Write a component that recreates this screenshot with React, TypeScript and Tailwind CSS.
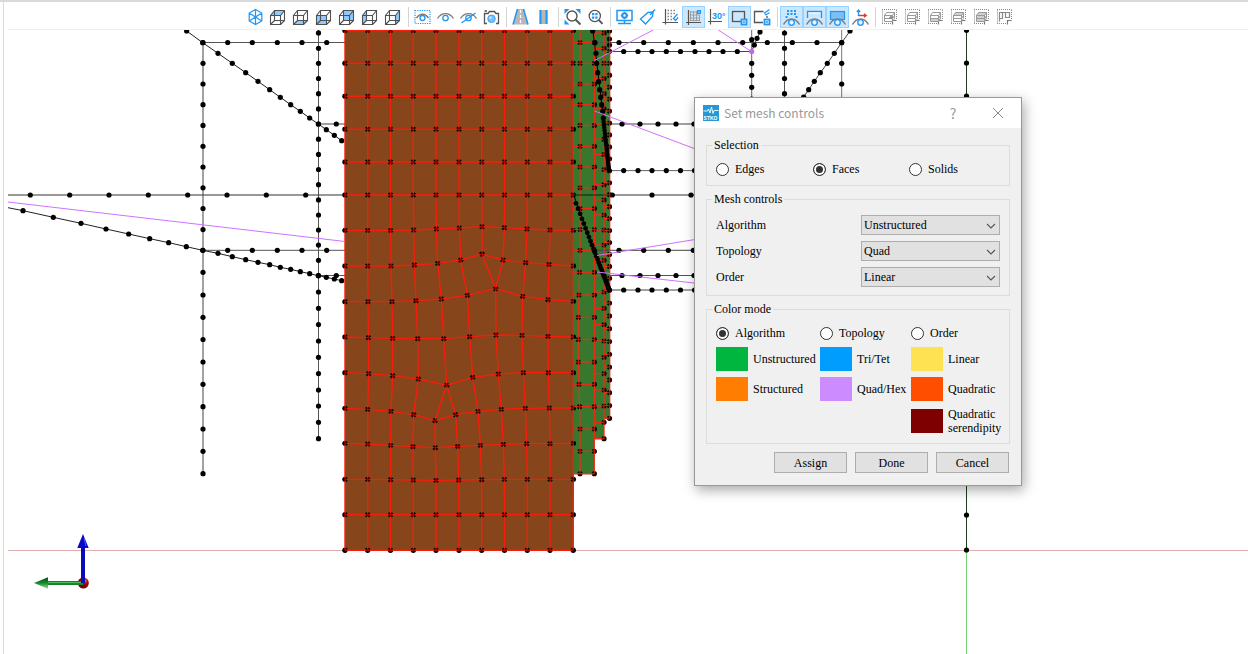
import React, { useState } from "react";

type Pt = [number, number];

/* ---------- toolbar icons, drawn in a 23 x 22 cell ---------- */

const BLUE = "#2196f3";
const DARK = "#505050";
const GRAY = "#7d7d7d";

const Cell = ({ children }: { children: React.ReactNode }) => (
  <svg viewBox="0 0 23 22" className="block h-[22px] w-[23px]" fill="none" aria-hidden="true">
    {children}
  </svg>
);

const faces: Record<string, string> = {
  top: "3.5,9.5 7.5,4.5 17.5,4.5 13.5,9.5",
  bottom: "3.5,18.5 7.5,14.5 17.5,14.5 13.5,18.5",
  front: "3.5,9.5 13.5,9.5 13.5,18.5 3.5,18.5",
  back: "7.5,4.5 17.5,4.5 17.5,14.5 7.5,14.5",
  left: "3.5,9.5 7.5,4.5 7.5,14.5 3.5,18.5",
  right: "13.5,9.5 17.5,4.5 17.5,14.5 13.5,18.5",
};

const Box = ({ face }: { face: string }) => (
  <Cell>
    <polygon points={faces[face]} fill="#90caff" />
    <path
      d="M3.5 9.5H13.5V18.5H3.5ZM7.5 4.5H17.5V14.5H7.5ZM3.5 9.5L7.5 4.5M13.5 9.5L17.5 4.5M13.5 18.5L17.5 14.5M3.5 18.5L7.5 14.5"
      stroke={DARK}
      strokeWidth="1.1"
    />
  </Cell>
);

const Iso = () => (
  <Cell>
    <path
      d="M11.5 3.5L17.8 7V15L11.5 18.5L5.2 15V7ZM11.5 11V3.5M11.5 11L17.8 15M11.5 11L5.2 15M5.2 7L11.5 11L17.8 7M11.5 11V18.5"
      stroke={BLUE}
      strokeWidth="1.2"
    />
  </Cell>
);

const EyeShape = () => (
  <>
    <path d="M3.5 12.5C7.5 6 15.5 6 19.5 12.5" stroke={GRAY} strokeWidth="1.4" />
    <circle cx="11.5" cy="12" r="2.7" stroke={BLUE} strokeWidth="1.3" fill="#fff" />
  </>
);

const LowEye = () => (
  <>
    <path d="M3.5 18.5C7.5 11 15.5 11 19.5 18.5" stroke={GRAY} strokeWidth="1.5" />
    <circle cx="11.5" cy="16.5" r="2.8" stroke={BLUE} strokeWidth="1.3" fill="#e5f3ff" />
  </>
);

const Grayed = ({ kind }: { kind: number }) => (
  <Cell>
    <path
      d="M4 3.5H18.5M4.5 3.5V18M4 17.5H14M18.5 4V13"
      stroke="#888"
      strokeWidth="1"
      strokeDasharray="1 1"
    />
    <path d="M14.5 18.5V14.5H18.5" stroke="#777" strokeWidth="1.2" />
    {kind === 5 ? (
      <path d="M6.5 6V15.5M9.5 6V12.5H6.5M9.5 6.5H16.5V11.5H12.5V6.5M6.5 6.5H9.5" stroke="#888" strokeWidth="1.2" />
    ) : (
      <>
        <path
          d="M6.5 9.5L8.5 6.5H16.5L14.5 9.5Z"
          fill={kind >= 3 ? "#d0d0d0" : "none"}
          stroke="#999"
        />
        <path d="M6.5 9.5H14.5V12.5H6.5Z" fill={kind === 4 ? "#d0d0d0" : "none"} stroke="#999" />
        <path
          d="M6.5 12.5H14.5V15.5H6.5ZM14.5 15.5L16.5 12.5V6.5M14.5 12.5L16.5 9.5"
          fill={kind === 2 || kind === 4 ? "#d0d0d0" : "none"}
          stroke="#999"
        />
        {kind === 0 && <circle cx="13" cy="11.5" r="1.6" fill="#888" />}
      </>
    )}
  </Cell>
);

type Tool = { label: string; icon: React.ReactNode; on?: boolean };

const groups: Tool[][] = [
  [
    { label: "Isometric view", icon: <Iso /> },
    { label: "Top view", icon: <Box face="top" /> },
    { label: "Bottom view", icon: <Box face="bottom" /> },
    { label: "Front view", icon: <Box face="front" /> },
    { label: "Back view", icon: <Box face="back" /> },
    { label: "Left view", icon: <Box face="left" /> },
    { label: "Right view", icon: <Box face="right" /> },
  ],
  [
    {
      label: "Isolate",
      icon: (
        <Cell>
          <rect x="4" y="4.5" width="15" height="13" stroke={BLUE} strokeWidth="1.2" strokeDasharray="1.2 1.1" />
          <path d="M5.5 12C9 7 14 7 17.5 12" stroke={GRAY} strokeWidth="1.4" />
          <circle cx="11.5" cy="12" r="2.5" stroke={BLUE} strokeWidth="1.3" />
        </Cell>
      ),
    },
    { label: "Show", icon: <Cell><EyeShape /></Cell> },
    {
      label: "Hide",
      icon: (
        <Cell>
          <EyeShape />
          <path d="M4.5 17L18.5 7" stroke={BLUE} strokeWidth="1.3" />
        </Cell>
      ),
    },
    {
      label: "Snapshot",
      icon: (
        <Cell>
          <path d="M7 17.5H4.5V7.5H8L9.5 5.5H14.5L16 7.5H18.5V17.5H16M4.5 5H7" stroke="#555" strokeWidth="1.3" />
          <circle cx="11.5" cy="12.8" r="3.8" fill="#7cc0fa" stroke={BLUE} strokeWidth="0.8" />
          <circle cx="10.5" cy="11.6" r="1.2" fill="#d4ebff" />
        </Cell>
      ),
    },
  ],
  [
    {
      label: "Perspective",
      icon: (
        <Cell>
          <path d="M8.5 3H14.5L19 18.5H4Z" fill="#b8b8b8" />
          <path d="M8.5 3L4 18.5M14.5 3L19 18.5" stroke={BLUE} strokeWidth="1.5" />
          <path d="M11.5 4V18.5" stroke="#fff" strokeWidth="1.2" strokeDasharray="3 2" />
        </Cell>
      ),
    },
    {
      label: "Orthographic",
      icon: (
        <Cell>
          <path d="M7.5 4H15.5V18H7.5Z" fill="#b8b8b8" />
          <path d="M8.5 4V18M14.5 4V18" stroke={BLUE} strokeWidth="2" />
        </Cell>
      ),
    },
  ],
  [
    {
      label: "Zoom to fit",
      icon: (
        <Cell>
          <path d="M3.5 8V3H8.5ZM14.5 3H19.5V8ZM3.5 13.5V18.5H8.5Z" fill={BLUE} />
          <circle cx="11" cy="10" r="5" stroke="#555" strokeWidth="1.4" fill="#fff" />
          <path d="M14.5 13.5L19.5 18.5" stroke="#555" strokeWidth="2" />
        </Cell>
      ),
    },
    {
      label: "Zoom selection",
      icon: (
        <Cell>
          <circle cx="10.8" cy="10" r="5.6" stroke="#555" strokeWidth="1.3" />
          <path d="M14.8 14L18.5 17.8" stroke="#555" strokeWidth="1.8" />
          <path d="M8 7H10.3V9.3H8ZM11.3 7H13.6V9.3H11.3ZM8 10.5H10.3V12.8H8ZM11.3 10.5H13.6V12.8H11.3Z" fill={BLUE} />
        </Cell>
      ),
    },
  ],
  [
    {
      label: "Display settings",
      icon: (
        <Cell>
          <rect x="4" y="4.5" width="15" height="10" stroke={BLUE} strokeWidth="1.5" />
          <circle cx="11.5" cy="9.5" r="2.2" stroke={BLUE} strokeWidth="2" />
          <path d="M11.5 5.8V7M11.5 12V13.2M7.8 9.5H9M14 9.5H15.2M11.5 15V17.5M5 17.5H18" stroke={BLUE} strokeWidth="1.5" />
        </Cell>
      ),
    },
    {
      label: "Label",
      icon: (
        <Cell>
          <path d="M12 6.5L17 6L16.5 10.5L9.5 18L4.5 13Z" stroke={BLUE} strokeWidth="1.4" />
          <path d="M14 9L19 3.5" stroke={BLUE} strokeWidth="1.4" />
        </Cell>
      ),
    },
    {
      label: "Grid",
      icon: (
        <Cell>
          <path d="M6.5 3V18.5M3.5 16.5H19" stroke="#555" strokeWidth="1.2" />
          <path d="M8.5 4.5H17.5M8.5 7.5H17.5M8.5 10.5H14M8.5 13.5H13" stroke="#888" strokeWidth="1.4" strokeDasharray="1.5 1.5" />
          <path d="M18.5 8L14.5 12.5L16.5 14.5L19 11.5" stroke={BLUE} strokeWidth="1.3" />
        </Cell>
      ),
    },
    {
      label: "Snap to grid",
      on: true,
      icon: (
        <Cell>
          <path d="M6.5 4V19M4 16.5H19" stroke="#555" strokeWidth="1.2" />
          <path d="M8.5 5V15M11.5 5V15M14.5 5V15M17.5 9V15M8 6H14M8 9H18M8 12H18M8 14.5H18" stroke="#999" strokeWidth="0.9" />
          <rect x="15.5" y="4.5" width="3" height="3" fill="#6cb8f8" stroke={BLUE} />
        </Cell>
      ),
    },
    {
      label: "Angle snap",
      icon: (
        <Cell>
          <path d="M5.5 3V18.5M3 15.5H17" stroke="#555" strokeWidth="1.2" />
          <text x="7" y="12.5" fontSize="9" fontFamily="Liberation Sans" fontWeight="700" fill={BLUE}>30°</text>
        </Cell>
      ),
    },
    {
      label: "Pick rectangle",
      on: true,
      icon: (
        <Cell>
          <rect x="4.5" y="5.5" width="12" height="10" stroke="#555" strokeWidth="1.3" />
          <rect x="13.5" y="13.5" width="5" height="5" fill="#fff" stroke={BLUE} strokeWidth="1.8" />
          <circle cx="16" cy="16" r="1" fill={BLUE} />
        </Cell>
      ),
    },
    {
      label: "Pick options",
      icon: (
        <Cell>
          <path d="M12.5 5.5H3.5V16.5H12M16 10V12" stroke="#555" strokeWidth="1.3" />
          <rect x="13.5" y="13.5" width="5" height="5" fill="#fff" stroke={BLUE} strokeWidth="1.8" />
          <circle cx="16" cy="16" r="1" fill={BLUE} />
          <path d="M18.5 3.5L13.5 7L15 9L18.5 6.5" stroke={BLUE} strokeWidth="1.2" />
        </Cell>
      ),
    },
  ],
  [
    {
      label: "Show vertices",
      on: true,
      icon: (
        <Cell>
          <path
            d="M7 4H9V6H7ZM10.5 4H12.5V6H10.5ZM14 4H16V6H14ZM7 7H9V9H7ZM10.5 7H12.5V9H10.5ZM14 7H16V9H14ZM5.5 10H7.5V12H5.5ZM15.5 10H17.5V12H15.5Z"
            fill={BLUE}
          />
          <LowEye />
        </Cell>
      ),
    },
    {
      label: "Show edges",
      on: true,
      icon: (
        <Cell>
          <path d="M4.5 12V5.5H18.5V12" stroke={BLUE} strokeWidth="1.3" />
          <path d="M5.5 7H17.5" stroke="#fff" />
          <LowEye />
        </Cell>
      ),
    },
    {
      label: "Show faces",
      on: true,
      icon: (
        <Cell>
          <rect x="4.5" y="5.5" width="14" height="8" fill="#7cbef8" stroke={BLUE} strokeWidth="1.2" />
          <LowEye />
        </Cell>
      ),
    },
    {
      label: "Show axes",
      icon: (
        <Cell>
          <LowEye />
          <path d="M9.5 10V4M7.8 6L9.5 4L11.2 6" stroke={BLUE} strokeWidth="1.3" />
          <path d="M9.5 9.5H17M15 7.8L17.3 9.5L15 11.2" stroke="#e53935" strokeWidth="1.3" />
        </Cell>
      ),
    },
  ],
  [
    { label: "Vertex group", icon: <Grayed kind={0} /> },
    { label: "Edge group", icon: <Grayed kind={1} /> },
    { label: "Face group", icon: <Grayed kind={2} /> },
    { label: "Solid group", icon: <Grayed kind={3} /> },
    { label: "Body group", icon: <Grayed kind={4} /> },
    { label: "Interaction group", icon: <Grayed kind={5} /> },
  ],
];

const Toolbar = () => (
  <div role="toolbar" aria-label="View" className="flex shrink-0 items-center overflow-hidden border-b border-[#f0f0f0] pt-1 pb-px pl-[236px]">
    {groups.map((g, i) => (
      <React.Fragment key={i}>
        {i > 0 && (
          <span className="flex w-1.5 shrink-0 justify-center">
            <span className="h-5 w-px bg-[#d4d4d4]" />
          </span>
        )}
        {g.map((t) => (
          <button
            key={t.label}
            type="button"
            aria-label={t.label}
            className={
              t.on
                ? "shrink-0 bg-[#cce8ff] outline outline-1 -outline-offset-1 outline-[#99d1ff]"
                : "shrink-0 hover:bg-[#e5f3ff]"
            }
          >
            {t.icon}
          </button>
        ))}
      </React.Fragment>
    ))}
  </div>
);

/* ---------- mesh geometry ---------- */

const colX = [345, 367.7, 390.5, 413.3, 436, 459, 481.7, 504.5, 527.3, 550, 573.2];
const flat = (y: number): Pt[] => colX.map((x) => [x, y]);
const local = (pts: Pt[]): Pt[] => pts.map(([x, y]) => [330 + x / 3, 220 + y / 3]);

const rows: Pt[][] = [
  flat(30.6),
  flat(63.3),
  flat(96.3),
  flat(129.2),
  flat(162),
  flat(195),
  local([[45, 31], [113, 31], [182, 31], [251, 30], [319, 27], [388, 24], [456, 20], [523, 23], [591, 27], [660, 30], [730, 31]]),
  local([[45, 138], [113, 138], [183, 138], [253, 135], [323, 130], [392, 120], [456, 102], [519, 120], [587, 128], [657, 133], [730, 138]]),
  local([[45, 245], [114, 245], [186, 245], [258, 242], [334, 237], [412, 226], [497, 206], [578, 229], [654, 239], [730, 244]]),
  local([[45, 351], [115, 353], [188, 355], [263, 356], [341, 356], [419, 350], [498, 345], [576, 346], [654, 349], [730, 351]]),
  local([[45, 458], [116, 461], [188, 467], [265, 477], [350, 496], [428, 472], [505, 462], [580, 458], [655, 458], [730, 458]]),
  local([[45, 565], [113, 568], [183, 574], [251, 584], [315, 602], [377, 584], [444, 574], [514, 568], [586, 565], [658, 564], [730, 564]]),
  local([[45, 670], [113, 672], [182, 676], [249, 680], [316, 683], [383, 679], [451, 676], [520, 673], [590, 671], [660, 671], [730, 670]]),
  local([[45, 778], [113, 778], [182, 779], [250, 780], [318, 781], [386, 780], [455, 779], [523, 778], [592, 778], [660, 778], [730, 778]]),
  flat(514.7),
  flat(550.3),
];

/* verticals join equal indices; where the count changes, one node takes two */
const verticals: [Pt, Pt][] = rows.slice(1).flatMap((b, i) => {
  const a = rows[i];
  if (a.length === b.length) return a.map((p, k): [Pt, Pt] => [p, b[k]]);
  if (a.length > b.length) return a.map((p, k): [Pt, Pt] => [p, b[k > 6 ? k - 1 : k]]);
  return b.map((p, k): [Pt, Pt] => [a[k > 4 ? k - 1 : k], p]);
});

const yA = [42.5, 63.3, 84, 104.7, 125.4, 146.3, 167, 187.8, 208.5, 229.6, 250.3, 272.3, 295, 317.3, 339.5, 362, 384.3, 406.7, 429, 451.3, 473.7];
const xA = [580, 580, 580, 580, 580, 580, 580, 580, 580, 580, 580, 579.6, 579, 578.3, 578.3, 578.3, 579, 579.6, 580, 580, 580];
const yB = [32.9, 48.3, 63.3, 78.5, 93.7, 108.9, 124, 139.2, 154.4, 169.5, 184.7, 199.9, 215, 230, 245.1, 260.3, 275.6, 292, 308.3, 324.6, 341, 357.3, 373.6, 390, 406, 422.3, 438.7];
const yC = [
  ...Array.from({ length: 21 }, (_, i) => 51.3 + i * 11.95),
  ...Array.from({ length: 10 }, (_, i) => 303.1 + i * 12.8),
];

const crowd = (a: Pt, b: Pt, n: number, power: number): Pt[] =>
  Array.from({ length: n + 1 }, (_, i) => {
    const t = 1 - Math.pow(1 - i / n, power);
    return [a[0] + (b[0] - a[0]) * t, a[1] + (b[1] - a[1]) * t];
  });

const third = (pts: Pt[], ox = 0, oy = 20): Pt[] => pts.map(([x, y]) => [ox + x / 3, oy + y / 3]);

const upperBrace = third([[560, 33], [608, 68], [654, 100], [697, 130], [737, 158], [774, 184], [809, 209], [841, 232], [872, 254], [901, 274], [929, 294], [955, 312], [979, 329], [1003, 346], [1025, 362]]);
const lowerBrace = third([[69, 572], [160, 592], [243, 610], [318, 627], [386, 642], [449, 656], [506, 668], [559, 680], [608, 691], [654, 700], [697, 710], [737, 719], [774, 727], [809, 734], [841, 742], [872, 748], [901, 755], [929, 761], [955, 767], [979, 772], [1003, 777], [1025, 782]]);
const rightBrace = third([[750, 33], [725, 68], [703, 100], [682, 130], [661, 158], [643, 184], [626, 209], [611, 231]], 600);
const shortBrace = third([[482, 30], [480, 36], [471, 55], [463, 75], [455, 95]], 600);

const along = (y: number, xs: number[]): Pt[] => xs.map((x) => [x, y]);
const down = (x: number, ys: number[]): Pt[] => ys.map((y) => [x, y]);
const five = [227.7, 252.3, 277.3, 302, 326.7];
const wide = [623.7, 638, 652, 666.3, 680.5, 694.5];
const mid = [622, 640, 658, 676, 694];

const wireDots: Pt[] = [
  ...upperBrace,
  ...lowerBrace,
  ...rightBrace,
  ...shortBrace.slice(1, 4),
  ...down(203, yA),
  ...down(318.5, yB),
  ...along(42.5, five),
  ...along(124, [336.3]),
  ...along(195, [30.3, 69.7, 109, 148.3, 187.7, 227, 266.3, 305.7]),
  ...along(250.3, five),
  ...along(275.5, [336.3]),
  ...along(42.5, [619, 643.7, 668.3, 693.3, 718, 742.7, 767.3, 792.3, 817, 841.7]),
  ...along(51.5, [...wide.slice(0, 5), 695, 709, 723, 737.3]),
  ...along(124, mid),
  ...along(170.6, wide),
  ...along(195, [612.3, 652, 691]),
  ...along(250.3, [619, 643.7, 668.3, 693.3]),
  ...along(275.5, mid),
  ...along(290, wide),
  ...down(751.7, [39.7, 63.3, 75.3, 87.3, 99]),
  ...down(784.5, [33, 48.3, 63.3, 78.5, 93.7]),
  ...down(841.7, [63.3, 84]),
  ...down(966.5, [30.3, 63, 96, 515, 550]),
];

const wires: [number, number, number, number, string][] = [
  [203, 42, 203, 474, "#444"],
  [318.5, 30, 318.5, 439, "#555"],
  [203, 42.5, 345, 42.5, "#555"],
  [318.5, 124, 345, 124, "#444"],
  [8, 195, 345, 195, "#333"],
  [203, 250.3, 345, 250.3, "#555"],
  [318.5, 275.5, 345, 275.5, "#555"],
  [594, 42.5, 842, 42.5, "#555"],
  [610, 51.5, 752, 51.5, "#444"],
  [610, 124, 700, 124, "#444"],
  [610, 170.6, 700, 170.6, "#666"],
  [573, 195, 700, 195, "#333"],
  [594, 250.3, 700, 250.3, "#444"],
  [604, 275.5, 700, 275.5, "#555"],
  [610, 290, 700, 290, "#444"],
  [751.7, 30, 751.7, 100, "#666"],
  [784.5, 30, 784.5, 100, "#555"],
  [841.7, 30, 841.7, 100, "#777"],
  [966.5, 30, 966.5, 550, "#1f3d1f"],
];

const poly = (pts: Pt[]) => pts.map((p) => p.join(",")).join(" ");

const Dots = ({ pts, r = 2.6, color = "#000" }: { pts: Pt[]; r?: number; color?: string }) => (
  <g fill={color}>
    {pts.map(([x, y], i) => (
      <circle key={i} cx={x} cy={y} r={r} />
    ))}
  </g>
);

const sideNodes: Pt[] = [
  ...yA.flatMap((y, i): Pt[] => [[xA[i], y], [594.3, y]]),
  ...down(604, yB),
  ...down(609.5, [31, 39, 45, ...yC]),
];

const Scene = () => (
  <svg className="absolute inset-0 h-full w-full" fill="none" role="img" aria-label="Finite element model">
    <defs>
      <radialGradient id="ball" cx="0.65" cy="0.3">
        <stop offset="0" stopColor="#f66" />
        <stop offset="0.5" stopColor="#c00000" />
        <stop offset="1" stopColor="#700" />
      </radialGradient>
      <linearGradient id="leaf" x1="0" y1="0" x2="0" y2="1">
        <stop offset="0" stopColor="#064d14" />
        <stop offset="0.5" stopColor="#178a2c" />
        <stop offset="1" stopColor="#8fdc9c" />
      </linearGradient>
    </defs>
    <g transform="translate(-8 -30)">
      <path d="M8 550.5H4000" stroke="#dfb0b0" />
      <path d="M966.5 550V4000" stroke="#6fd06f" />

      <polygon points="345,30 573.5,30 573.5,550.3 345,550.3" fill="#87451c" />
      <polygon points="573.5,30 609.7,30 609.7,418.5 604,418.5 604,438.7 594.3,438.7 594.3,473.7 573.5,473.7" fill="#37772e" />

      {wires.map(([x1, y1, x2, y2, c], i) => (
        <path key={i} d={`M${x1} ${y1}L${x2} ${y2}`} stroke={c} />
      ))}
      <polyline points={poly(upperBrace)} stroke="#222" />
      <polyline points={poly([[8, 207.7], ...lowerBrace])} stroke="#222" />
      <polyline points={poly(rightBrace)} stroke="#444" />
      <polyline points={poly(shortBrace)} stroke="#444" />
      <Dots pts={wireDots} />

      <Dots pts={rows.flat()} r={2.7} />
      <Dots pts={sideNodes} r={2.6} />

      <g stroke="#f81c0a" strokeWidth="1.4">
        {rows.map((r, i) => (
          <polyline key={i} points={poly(r)} />
        ))}
        {verticals.map(([a, b], i) => (
          <path key={i} d={`M${a.join(" ")}L${b.join(" ")}`} />
        ))}
      </g>
      <g stroke="#f02a14" strokeWidth="1.3">
        <path d="M573.5 473.7H594.3V30M594.3 438.7H604V30M604 418.5H609.7V30" />
        <polyline points={poly([[580, 30], ...yA.map((y, i): Pt => [xA[i], y])])} />
        {yA.map((y) => (
          <path key={y} d={`M573.5 ${y}H594.3`} />
        ))}
        {yB.map((y) => (
          <path key={y} d={`M594.3 ${y}H604`} />
        ))}
        {yC.map((y) => (
          <path key={y} d={`M604 ${y}H609.7`} />
        ))}
      </g>
      <Dots pts={rows.flat()} r={1.8} color="rgba(0,0,0,0.45)" />
      <Dots pts={sideNodes} r={1.8} color="rgba(0,0,0,0.3)" />

      <path d="M573 195H610" stroke="#1d3a18" />
      <polyline points="593,31 598,73 604,124 609,170.6" stroke="#000" />
      <Dots pts={third([[98, 33], [105, 68], [108, 100], [110, 130], [113, 158], [116, 185], [119, 209], [122, 232], [125, 254], [128, 274], [130, 294]], 560)} />
      <Dots pts={crowd([603.6, 121.5], [609, 170.6], 22, 1.4)} r={2.2} />
      <path d="M574 196L609.3 290" stroke="#000" />
      <Dots pts={crowd([576, 203.3], [609.3, 290], 32, 2)} r={2.4} />

      <g stroke="#d070ff">
        <path d="M8 202L345 241.5" />
        <path d="M653.3 30L594.5 60.5M718.3 30L751.7 51.7" />
        <path d="M594.5 111L700 150.7M597 255.5L700 238.7M597 272L700 283.7" />
      </g>
      <circle cx="751.7" cy="51.6" r="2.6" fill="#d35cff" />

      <circle cx="83.3" cy="583" r="5.5" fill="url(#ball)" />
      <path d="M83 583H47" stroke="#17802b" strokeWidth="4" />
      <path d="M83 582.6H47" stroke="#4fc463" />
      <polygon points="34,583 48,577.3 48,588.7" fill="url(#leaf)" />
      <path d="M83 583V547" stroke="#0a0ab8" strokeWidth="4" />
      <polygon points="83,534 88.7,548 77.3,548" fill="#0808c8" />
      <path d="M84 538L86 546" stroke="#5555ee" />
    </g>
  </svg>
);

/* ---------- dialog ---------- */

const Radio = ({ name, label, checked, onPick }: { name: string; label: string; checked: boolean; onPick: () => void }) => (
  <label className="flex h-4 items-center gap-1.5">
    <input
      type="radio"
      name={name}
      checked={checked}
      onChange={onPick}
      className="size-[13px] shrink-0 appearance-none rounded-full border border-[#333] bg-white checked:bg-[#333] checked:shadow-[inset_0_0_0_2px_#fff]"
    />
    {label}
  </label>
);

const Group = ({ title, children }: { title: string; children: React.ReactNode }) => (
  <fieldset className="min-w-0 border border-[#dcdcdc] px-[9px] pb-2">
    <legend className="-ml-1 px-0.5 leading-[14px]">{title}</legend>
    <div className="pt-[9px]">{children}</div>
  </fieldset>
);

const Drop = ({ label, options }: { label: string; options: string[] }) => (
  <label className="flex h-5 items-center justify-between">
    {label}
    <span className="relative h-5 w-[139px]">
      <select className="block h-5 w-full appearance-none border border-[#adadad] bg-[#e1e1e1] pr-4 pl-0.5 leading-[14px]">
        {options.map((o) => (
          <option key={o}>{o}</option>
        ))}
      </select>
      <svg viewBox="0 0 10 6" className="pointer-events-none absolute top-2 right-1 h-1.5 w-2.5" fill="none">
        <path d="M1 1L5 5L9 1" stroke="#555" strokeWidth="1.1" />
      </svg>
    </span>
  </label>
);

const Swatch = ({ color, children }: { color: string; children: React.ReactNode }) => (
  <div className="flex items-center gap-[5px] whitespace-nowrap">
    <span className={`h-6 w-8 shrink-0 ${color}`} />
    <span>{children}</span>
  </div>
);

const MeshDialog = () => {
  const [sel, setSel] = useState("Faces");
  const [mode, setMode] = useState("Algorithm");
  return (
    <section
      role="dialog"
      aria-label="Set mesh controls"
      className="absolute top-[67px] left-[686px] w-[328px] border border-[#999] bg-[#f0f0f0] font-['Liberation_Serif',serif] text-[12px] leading-[14px] text-black shadow-[2px_4px_12px_rgba(0,0,0,0.35)]"
    >
      <header className="flex h-[30px] items-center bg-white pr-[17px] pl-2 font-['Noto_Sans_CJK_TC','Noto_Sans',sans-serif] text-[12px] text-[#999]">
        <svg viewBox="0 0 16 16" className="mr-[5px] size-4" fill="none" aria-hidden="true">
          <rect width="16" height="16" fill="#2499d6" />
          <path d="M0.5 6H4.5L5.5 4L7 8L8.5 2L10 8.5L11 5.5H15.5" stroke="#fff" strokeWidth="0.9" />
          <text x="0.6" y="15.4" fontSize="5" fontWeight="700" fill="#fff" fontFamily="Liberation Sans">STKO</text>
        </svg>
        <h1 className="flex-1">Set mesh controls</h1>
        <button type="button" aria-label="Help" className="w-5 text-center text-[14px]">?</button>
        <button type="button" aria-label="Close" className="ml-[29px]">
          <svg viewBox="0 0 12 12" className="size-3" fill="none">
            <path d="M1 1L11 11M11 1L1 11" stroke="#888" />
          </svg>
        </button>
      </header>
      <div className="flex flex-col gap-1.5 px-[11px] pt-2.5 pb-3">
        <Group title="Selection">
          <div className="grid grid-cols-[97px_96px_1fr]">
            {["Edges", "Faces", "Solids"].map((s) => (
              <Radio key={s} name="selection" label={s} checked={sel === s} onPick={() => setSel(s)} />
            ))}
          </div>
        </Group>
        <Group title="Mesh controls">
          <div className="flex flex-col gap-1.5">
            <Drop label="Algorithm" options={["Unstructured", "Structured"]} />
            <Drop label="Topology" options={["Quad", "Tri"]} />
            <Drop label="Order" options={["Linear", "Quadratic"]} />
          </div>
        </Group>
        <Group title="Color mode">
          <div className="grid grid-cols-[104px_91px_1fr] gap-y-1.5">
            {["Algorithm", "Topology", "Order"].map((s) => (
              <Radio key={s} name="mode" label={s} checked={mode === s} onPick={() => setMode(s)} />
            ))}
            <Swatch color="bg-[#00b63e]">Unstructured</Swatch>
            <Swatch color="bg-[#009dff]">Tri/Tet</Swatch>
            <Swatch color="bg-[#ffe252]">Linear</Swatch>
            <Swatch color="bg-[#ff7d00]">Structured</Swatch>
            <Swatch color="bg-[#cc8bff]">Quad/Hex</Swatch>
            <Swatch color="bg-[#ff4e00]">Quadratic</Swatch>
            <div className="col-start-3">
              <Swatch color="bg-[#7f0000]">
                Quadratic
                <br />
                serendipity
              </Swatch>
            </div>
          </div>
        </Group>
        <div className="flex justify-end gap-2 pt-0.5 pr-px">
          {["Assign", "Done", "Cancel"].map((b) => (
            <button key={b} type="button" className="h-[21px] w-[73px] border border-[#adadad] bg-[#e1e1e1]">
              {b}
            </button>
          ))}
        </div>
      </div>
    </section>
  );
};

export default function App() {
  return (
    <div className="flex h-screen flex-col border-t-2 border-[#dadada] bg-white">
      <div className="ml-[3px] flex min-h-0 flex-1 flex-col border-l border-[#dadada] pl-1">
        <Toolbar />
        <main className="relative min-h-0 flex-1 overflow-hidden">
          <Scene />
          <MeshDialog />
        </main>
      </div>
    </div>
  );
}
